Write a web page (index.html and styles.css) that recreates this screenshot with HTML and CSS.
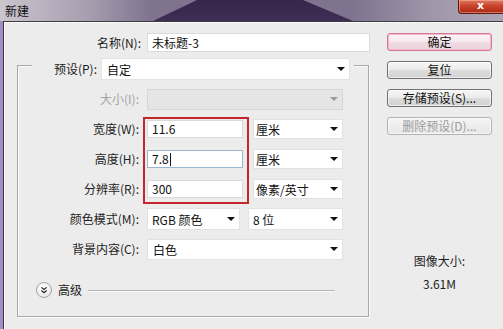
FILE: index.html
```html
<!DOCTYPE html>
<html lang="zh-CN">
<head>
<meta charset="utf-8">
<title>新建</title>
<link rel="stylesheet" href="styles.css">
</head>
<body>
<div class="titlebar">
  <span class="title">新建</span>
  <div class="close"><span>x</span></div>
</div>
<div class="window">
  <div class="frame"></div>
  <div class="dialog">
    <div class="main">
      <div class="name-row">
        <label class="label name-label">名称(N):</label>
        <div class="input name-input">未标题-3</div>
      </div>
      <div class="group">
        <div class="legend">
          <label class="label preset-label">预设(P):</label>
          <div class="select preset-select"><span>自定</span><i class="arrow"></i></div>
        </div>
        <div class="row">
          <label class="label disabled">大小(I):</label>
          <div class="select wide disabled-select"><span></span><i class="arrow gray"></i></div>
        </div>
        <div class="row">
          <label class="label">宽度(W):</label>
          <div class="input num">11.6</div>
          <div class="select unit"><span>厘米</span><i class="arrow"></i></div>
        </div>
        <div class="row">
          <label class="label">高度(H):</label>
          <div class="input num focus">7.8<span class="caret"></span></div>
          <div class="select unit"><span>厘米</span><i class="arrow"></i></div>
        </div>
        <div class="row">
          <label class="label">分辨率(R):</label>
          <div class="input num">300</div>
          <div class="select unit"><span>像素/英寸</span><i class="arrow"></i></div>
        </div>
        <div class="row">
          <label class="label">颜色模式(M):</label>
          <div class="select mode"><span>RGB 颜色</span><i class="arrow"></i></div>
          <div class="select depth"><span>8 位</span><i class="arrow"></i></div>
        </div>
        <div class="row">
          <label class="label">背景内容(C):</label>
          <div class="select wide"><span>白色</span><i class="arrow"></i></div>
        </div>
        <div class="advanced">
          <span class="adv-icon">
            <svg width="16" height="16" viewBox="0 0 16 16">
              <path d="M5 5 L8 7.5 L11 5" fill="none" stroke="#222" stroke-width="1.4"/>
              <path d="M5 8.5 L8 11 L11 8.5" fill="none" stroke="#222" stroke-width="1.4"/>
            </svg>
          </span>
          <span class="adv-text">高级</span>
          <span class="adv-line"></span>
        </div>
        <div class="highlight"></div>
      </div>
    </div>
    <div class="side">
      <button class="btn primary">确定</button>
      <button class="btn">复位</button>
      <button class="btn">存储预设(S)...</button>
      <button class="btn off">删除预设(D)...</button>
      <div class="info">
        <div class="info-title">图像大小:</div>
        <div class="info-value">3.61M</div>
      </div>
    </div>
  </div>
</div>
</body>
</html>
```
FILE: styles.css
```css
* { box-sizing: border-box; }
html, body {
  margin: 0;
  padding: 0;
}
body {
  width: 503px;
  height: 329px;
  overflow: hidden;
  font-family: "Noto Sans CJK SC", "Liberation Sans", sans-serif;
  font-size: 12px;
  color: #1a1a1a;
  background: #ececec;
}

/* title bar */
.titlebar {
  position: relative;
  height: 21px;
  display: flex;
  align-items: flex-start;
  background: linear-gradient(90deg, #cbc5ce 0%, #a69dae 18%, #7f7390 30%, #7f7390 70%, #9e95a8 85%, #aea6b6 100%);
}
.titlebar::before {
  content: "";
  position: absolute;
  left: 153px;
  top: 0;
  width: 200px;
  height: 21px;
  background: linear-gradient(180deg, #35264a, #3e2e56);
  clip-path: polygon(44px 0, 150px 0, 200px 100%, 0 100%);
}
.title {
  position: relative;
  margin: 2px 0 0 5px;
  font-size: 12px;
  line-height: 17px;
  color: #111;
}
.close {
  position: relative;
  margin-left: auto;
  margin-right: -6px;
  width: 51px;
  height: 14px;
  border: 1px solid #5a1a12;
  border-top: none;
  border-radius: 0 0 4px 4px;
  background: linear-gradient(180deg, #e07a62 0%, #c8442c 45%, #a92a18 100%);
  box-shadow: inset 0 0 0 1px rgba(255, 190, 170, 0.5);
  display: flex;
  justify-content: center;
}
.close span {
  color: #fff;
  font-family: "DejaVu Sans", sans-serif;
  font-weight: bold;
  font-size: 11px;
  line-height: 12px;
  margin-left: -6px;
}

/* window */
.window {
  display: flex;
  height: 308px;
}
.frame {
  width: 3px;
  background: #a28ec6;
}
.dialog {
  flex: 1;
  display: flex;
  background: #ececec;
  border-left: 1px solid #3d3d3d;
  border-top: 1px solid #3d3d3d;
  box-shadow: inset 1px 1px 0 #fafafa;
}

/* main column */
.main {
  width: 366px;
  padding: 11px 0 0 13px;
}
.label {
  text-align: right;
  white-space: nowrap;
  line-height: 16px;
  color: #1e1e1e;
}
.label.disabled { color: #a3a3a3; }

.name-row {
  display: flex;
  align-items: center;
  height: 19px;
}
.name-label { width: 128px; padding-right: 4px; }
.input {
  height: 19px;
  background: #fff;
  border: 1px solid #dadada;
  padding-left: 4px;
  line-height: 17px;
  font-size: 12px;
  color: #111;
}
.name-input { width: 223px; margin-left: 2px; }

.group {
  position: relative;
  width: 352px;
  margin-top: 13px;
  border: 1px solid #a8a8a8;
  box-shadow: inset 1px 1px 0 #fbfbfb, 1px 1px 0 #fbfbfb;
  padding-bottom: 16px;
}
.legend {
  display: flex;
  align-items: center;
  height: 22px;
  margin: -8px 14px 0 14px;
  background: #ececec;
}
.preset-label { width: 65px; }
.select {
  position: relative;
  display: flex;
  align-items: center;
  background: #fff;
  border: 1px solid #e2e2e2;
  padding-left: 5px;
  font-size: 12px;
  color: #111;
  white-space: nowrap;
}
.preset-select { width: 249px; height: 22px; margin-left: 4px; }
.arrow {
  position: absolute;
  right: 4px;
  top: 50%;
  margin-top: -2px;
  width: 0;
  height: 0;
  border-left: 4px solid transparent;
  border-right: 4px solid transparent;
  border-top: 4px solid #111;
}
.arrow.gray { border-top-color: #9a9a9a; }

.row {
  display: flex;
  align-items: center;
  height: 30px;
}
.legend + .row { margin-top: 4px; }
.row .label { width: 123px; padding-right: 2px; }
.row > :nth-child(2) { margin-left: 6px; }
.wide { width: 196px; height: 21px; }
.disabled-select {
  background: #e5e5e5;
  border-color: #d6d6d6;
}
.num { width: 96px; height: 18px; line-height: 16px; }
.focus { border-color: #9bb7d2; }
.caret {
  display: inline-block;
  width: 1px;
  height: 13px;
  background: #111;
  vertical-align: -2px;
  margin-left: 1px;
}
.unit { width: 90px; height: 20px; margin-left: 10px; padding-left: 2px; }
.mode { width: 93px; height: 22px; padding-left: 4px; }
.depth { width: 95px; height: 22px; margin-left: 8px; padding-left: 4px; }

.advanced {
  display: flex;
  align-items: center;
  height: 20px;
  margin-top: 16px;
  padding-left: 18px;
  padding-right: 33px;
}
.adv-icon {
  width: 16px;
  height: 16px;
  border-radius: 50%;
  border: 1px solid #a5a5a5;
  background: radial-gradient(circle at 40% 35%, #ffffff 0%, #f0f0f0 55%, #cfcfcf 100%);
  display: flex;
  align-items: center;
  justify-content: center;
}
.adv-icon svg { display: block; width: 14px; height: 14px; }
.adv-text {
  margin-left: 6px;
  line-height: 16px;
}
.adv-line {
  flex: 1;
  height: 1px;
  margin-left: 6px;
  background: #b4b4b4;
  box-shadow: 0 1px 0 #fafafa;
}

.highlight {
  position: absolute;
  left: 125px;
  top: 51px;
  width: 106px;
  height: 87px;
  border: 2px solid #c3262b;
  pointer-events: none;
}

/* right column */
.side {
  width: 105px;
  margin-left: 17px;
  padding-top: 11px;
  display: flex;
  flex-direction: column;
}
.btn {
  height: 18px;
  padding: 0;
  margin-bottom: 10px;
  font-family: "Noto Sans CJK SC", "Liberation Sans", sans-serif;
  font-size: 12px;
  line-height: 14px;
  color: #111;
  border: 1px solid #707070;
  border-radius: 3px;
  background: linear-gradient(180deg, #f6f6f6 0%, #ebebeb 48%, #dcdcdc 52%, #d2d2d2 100%);
  box-shadow: inset 0 0 0 1px rgba(255, 255, 255, 0.6);
}
.btn.primary {
  border-color: #d4789a;
  background: linear-gradient(180deg, #fdf3f7 0%, #f7e9ee 48%, #efdbe2 52%, #ead3db 100%);
  box-shadow: inset 0 0 0 1px #f4b8cd;
}
.btn.off {
  color: #9c9c9c;
  border-color: #b3b3b3;
  background: linear-gradient(180deg, #f4f4f4, #e8e8e8);
}
.info {
  margin-top: 107px;
  text-align: center;
  line-height: 18px;
  color: #1e1e1e;
}
.info-value { margin-top: 5px; }
```
